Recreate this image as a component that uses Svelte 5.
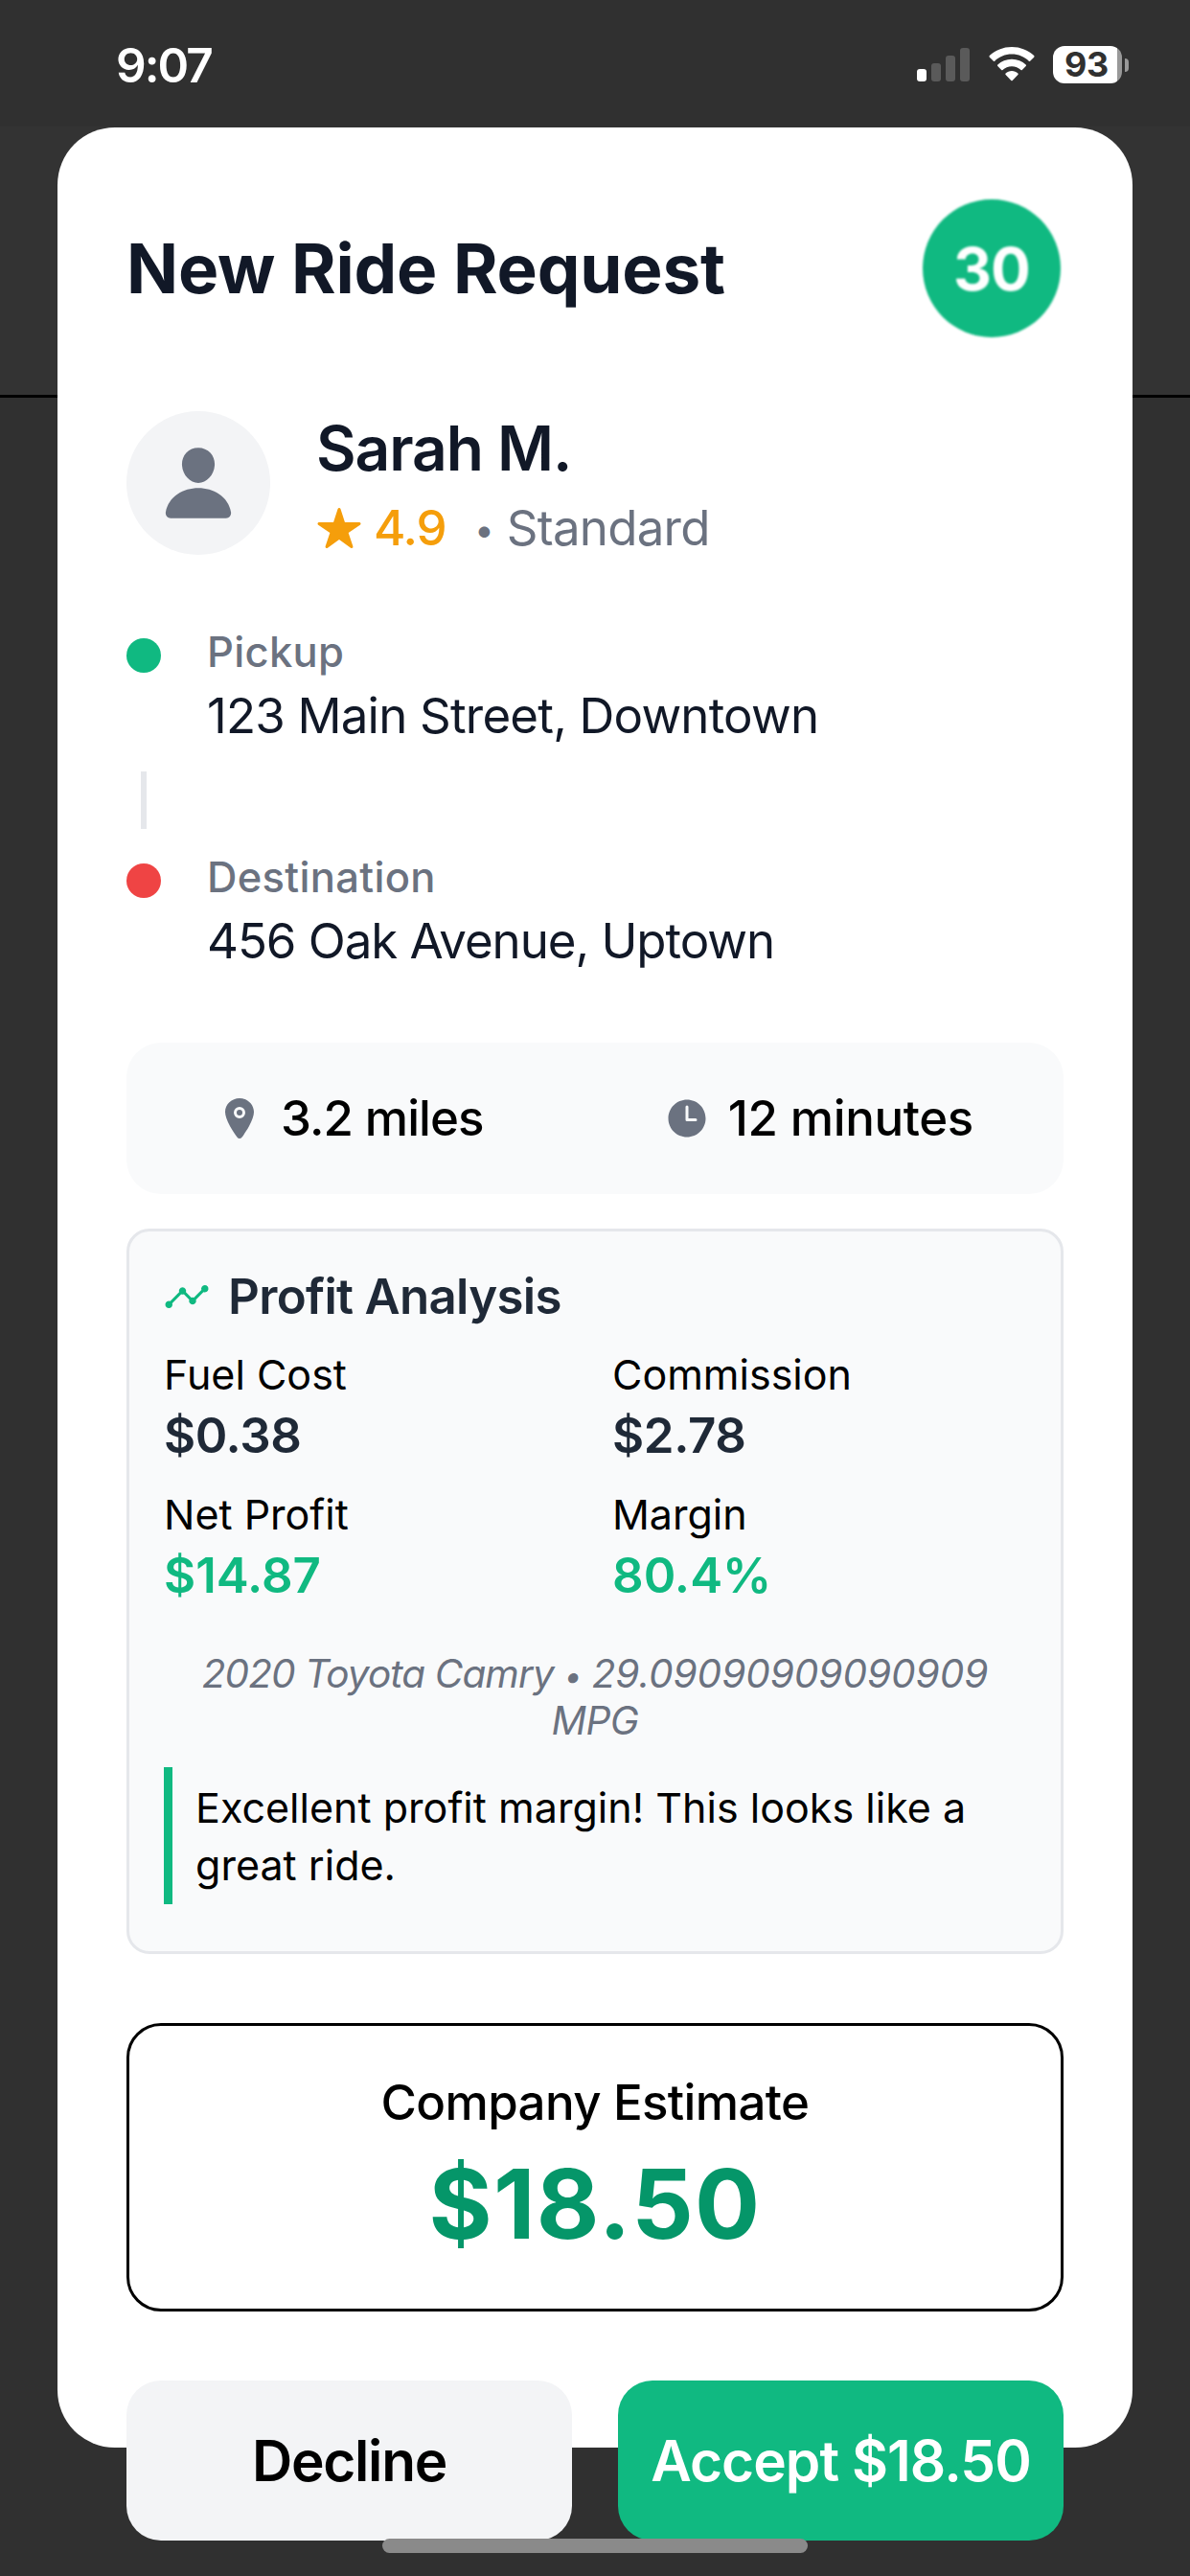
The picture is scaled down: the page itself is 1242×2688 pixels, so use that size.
<script>
  const trip = {
    rider: 'Sarah M.',
    rating: '4.9',
    type: 'Standard',
    pickup: '123 Main Street, Downtown',
    destination: '456 Oak Avenue, Uptown',
    distance: '3.2 miles',
    duration: '12 minutes',
    fare: '$18.50'
  };
  const metrics = [
    { label: 'Fuel Cost', value: '$0.38', tone: 'neutral' },
    { label: 'Commission', value: '$2.78', tone: 'neutral' },
    { label: 'Net Profit', value: '$14.87', tone: 'good' },
    { label: 'Margin', value: '80.4%', tone: 'good' }
  ];
  const vehicle = { name: '2020 Toyota Camry', mpg: '29.09090909090909' };
  const advice = 'Excellent profit margin! This looks like a great ride.';
  const bars = [13, 19, 27, 35];
</script>

<div class="screen">
  <header class="status">
    <span class="clock">9:07</span>
    <div class="indicators">
      <svg class="signal" viewBox="0 0 55 35" aria-hidden="true">
        {#each bars as h, i}
          <rect x={i * 15} y={35 - h} width="10" height={h} rx="3" fill={i === 0 ? '#fff' : '#5a5a5a'} />
        {/each}
      </svg>
      <svg class="wifi" viewBox="0 0 48 36" aria-hidden="true">
        <path fill="#fff" d="M24 7.600C31 7.600 37.200 10.300 41.800 14.700C42.200 15.100 42.700 15.100 43.100 14.700L47.200 10.700C47.700 10.200 47.700 9.600 47.200 9.100C41.200 3.400 33 0 24 0S6.800 3.400 0.800 9.100C0.300 9.600 0.300 10.200 0.800 10.700L4.900 14.700C5.300 15.100 5.800 15.100 6.200 14.700C10.800 10.300 17 7.600 24 7.600Z" />
        <path fill="#fff" d="M24 20.200C27.700 20.200 31 21.600 33.500 23.900C33.900 24.300 34.400 24.300 34.800 23.900L38.700 20C39.200 19.500 39.200 18.900 38.700 18.400C34.800 14.900 29.700 12.700 24 12.700S13.200 14.900 9.300 18.400C8.800 18.900 8.800 19.500 9.300 20L13.200 23.900C13.600 24.300 14.100 24.300 14.500 23.900C17 21.600 20.300 20.200 24 20.200Z" />
        <path fill="#fff" d="M30.400 27.500C30.900 28 30.900 28.600 30.400 29.100L24.700 34.900C24.300 35.300 23.700 35.300 23.300 34.900L17.600 29.100C17.100 28.600 17.100 28 17.600 27.500C19.300 26 21.500 25 24 25S28.700 26 30.400 27.500Z" />
      </svg>
      <div class="battery">
        <span class="cell">93</span>
        <span class="nub"></span>
      </div>
    </div>
  </header>

  <main class="card">
    <div class="heading">
      <h1>New Ride Request</h1>
      <div class="timer">30</div>
    </div>

    <section class="rider">
      <div class="avatar">
        <svg viewBox="0 0 512 512" aria-hidden="true"><path d="M332.640 64.580C313.180 43.570 286 32 256 32c-30.160 0-57.430 11.500-76.800 32.380-19.580 21.110-29.120 49.800-26.880 80.780C156.760 206.280 203.270 256 256 256s99.160-49.710 103.670-110.820c2.270-30.700-7.330-59.330-27.030-80.600zM432 480H80a31 31 0 0 1-24.200-11.130c-6.500-7.770-9.120-18.380-7.180-29.110C57.060 392.940 83.400 353.610 124.800 326c36.780-24.510 83.370-38 131.200-38s94.420 13.500 131.200 38c41.400 27.600 67.740 66.930 76.180 113.750 1.940 10.730-.68 21.340-7.180 29.110A31 31 0 0 1 432 480z" /></svg>
      </div>
      <div class="who">
        <div class="name">{trip.rider}</div>
        <div class="meta">
          <svg class="star" viewBox="0 0 512 512" aria-hidden="true"><path d="M394 480a16 16 0 0 1-9.390-3L256 383.760 127.390 477a16 16 0 0 1-24.550-18.080L153 310.350 23 221.200a16 16 0 0 1 9-29.200h160.380l48.400-148.950a16 16 0 0 1 30.440 0l48.400 149H480a16 16 0 0 1 9.050 29.200L359 310.350l50.130 148.530A16 16 0 0 1 394 480z" /></svg>
          <span class="score">{trip.rating}</span>
          <span class="type"><span class="bullet">•</span> {trip.type}</span>
        </div>
      </div>
    </section>

    <section class="route">
      <div class="stop">
        <span class="dot pickup"></span>
        <div>
          <div class="stop-label">Pickup</div>
          <div class="address">{trip.pickup}</div>
        </div>
      </div>
      <div class="connector"></div>
      <div class="stop">
        <span class="dot destination"></span>
        <div>
          <div class="stop-label">Destination</div>
          <div class="address second">{trip.destination}</div>
        </div>
      </div>
    </section>

    <section class="stats">
      <div class="stat">
        <svg viewBox="0 0 512 512" aria-hidden="true"><circle cx="256" cy="192" r="32" /><path d="M256 32c-88.220 0-160 68.650-160 153 0 40.170 18.310 93.590 54.420 158.780 29 52.340 62.550 99.670 80 123.220a31.750 31.750 0 0 0 51.220 0c17.420-23.550 51-70.880 80-123.220C397.690 278.610 416 225.190 416 185c0-84.350-71.780-153-160-153zm0 224a64 64 0 1 1 64-64 64.070 64.070 0 0 1-64 64z" /></svg>
        <span class="miles">{trip.distance}</span>
      </div>
      <div class="stat">
        <svg viewBox="0 0 512 512" aria-hidden="true"><path d="M256 48C141.130 48 48 141.130 48 256s93.130 208 208 208 208-93.130 208-208S370.870 48 256 48zm96 240h-96a16 16 0 0 1-16-16V128a16 16 0 0 1 32 0v128h80a16 16 0 0 1 0 32z" /></svg>
        <span class="minutes">{trip.duration}</span>
      </div>
    </section>

    <section class="profit">
      <div class="profit-head">
        <svg viewBox="0 0 512 512" aria-hidden="true"><path d="M456 128a40 40 0 0 0-37.230 54.600l-84.170 84.170a39.860 39.860 0 0 0-29.200 0l-60.170-60.170a40 40 0 1 0-74.460 0L70.600 306.770a40 40 0 1 0 22.630 22.630L193.400 229.230a39.860 39.860 0 0 0 29.200 0l60.170 60.170a40 40 0 1 0 74.460 0l84.170-84.170A40 40 0 1 0 456 128z" /></svg>
        <h2>Profit Analysis</h2>
      </div>
      <div class="metrics">
        {#each metrics as m}
          <div class="metric">
            <div class="metric-label">{m.label}</div>
            <div class="metric-value {m.tone}">{m.value}</div>
          </div>
        {/each}
      </div>
      <p class="vehicle"><span class="model">{vehicle.name}</span> <span class="bullet">•</span> <span class="mpg">{vehicle.mpg}</span> MPG</p>
      <p class="advice">{advice}</p>
    </section>

    <section class="estimate">
      <div class="estimate-label">Company Estimate</div>
      <div class="estimate-value">{trip.fare}</div>
    </section>

    <div class="actions">
      <button class="decline">Decline</button>
      <button class="accept">Accept {trip.fare}</button>
    </div>
  </main>

  <div class="home"></div>
</div>

<style>
  :global(body) {
    margin: 0;
    background: #303030;
  }
  .screen {
    position: relative;
    box-sizing: border-box;
    width: 1242px;
    height: 2688px;
    overflow: hidden;
    font-family: Inter, 'Liberation Sans', sans-serif;
    color: #000;
    background: linear-gradient(#303030 132px, #333 132px, #333 412px, #000 412px, #000 415px, #303030 415px);
  }
  h1, h2, p {
    margin: 0;
  }

  .status {
    box-sizing: border-box;
    height: 133px;
    padding: 48px 64px 0 121px;
    display: flex;
    justify-content: space-between;
    align-items: flex-start;
  }
  .clock {
    color: #fff;
    font-size: 49.5px;
    font-weight: 600;
    line-height: 40px;
    letter-spacing: -1.98px;
  }
  .indicators {
    display: flex;
    height: 39px;
  }
  .signal {
    width: 55px;
    height: 35px;
    margin: 2px 20px 0 0;
  }
  .wifi {
    width: 48px;
    height: 36px;
    margin: 1px 19px 0 0;
  }
  .battery {
    display: flex;
    align-items: center;
    gap: 3px;
  }
  .cell {
    width: 72px;
    height: 39px;
    border-radius: 12px;
    background: linear-gradient(90deg, #fff 67px, #999 67px);
    color: #303030;
    font-size: 36px;
    font-weight: 700;
    line-height: 39px;
    letter-spacing: -0.4px;
    text-indent: 12px;
  }
  .nub {
    width: 4px;
    height: 14px;
    border-radius: 0 4px 4px 0;
    background: #999;
  }

  .card {
    box-sizing: border-box;
    width: 1122px;
    height: 2421px;
    margin: 0 auto;
    padding: 72px;
    border-radius: 60px;
    background: #fff;
  }
  .heading {
    display: flex;
    justify-content: space-between;
    align-items: center;
    height: 150px;
    padding-right: 3px;
  }
  h1 {
    font-size: 71px;
    font-weight: 700;
    line-height: 86px;
    letter-spacing: -0.16px;
    color: #111827;
  }
  .timer {
    width: 144px;
    height: 144px;
    border-radius: 50%;
    background: #10b981;
    color: #fff;
    font-size: 62px;
    font-weight: 700;
    line-height: 146px;
    letter-spacing: -1px;
    text-align: center;
    filter: blur(0.8px);
  }

  .rider {
    display: flex;
    gap: 48px;
    margin-top: 74px;
  }
  .avatar {
    display: grid;
    place-items: center;
    width: 150px;
    height: 150px;
    border-radius: 50%;
    background: #f3f4f6;
  }
  .avatar svg {
    width: 84px;
    height: 84px;
    fill: #6b7280;
  }
  .name {
    height: 78px;
    font-size: 64px;
    font-weight: 600;
    line-height: 78px;
    letter-spacing: -1.04px;
    color: #111827;
  }
  .meta {
    display: flex;
    align-items: center;
    height: 64px;
    margin-top: 12px;
    font-size: 51px;
    line-height: 64px;
  }
  .star {
    width: 48px;
    height: 48px;
    margin-right: 12px;
    fill: #f59e0b;
  }
  .score {
    width: 105px;
    font-weight: 500;
    letter-spacing: -1.13px;
    color: #f59e0b;
  }
  .type {
    letter-spacing: -0.73px;
    color: #6b7280;
  }
  .type .bullet {
    font-size: 37px;
    line-height: 1;
    vertical-align: 3px;
  }

  .route {
    margin-top: 69px;
  }
  .stop {
    display: flex;
    gap: 48px;
    height: 129px;
  }
  .dot {
    width: 36px;
    height: 36px;
    margin-top: 14px;
    border-radius: 50%;
  }
  .pickup {
    background: #10b981;
  }
  .destination {
    background: #ef4444;
  }
  .stop-label {
    font-size: 43.5px;
    font-weight: 500;
    line-height: 57px;
    letter-spacing: 0.33px;
    color: #6b7280;
  }
  .address {
    margin-top: 6px;
    font-size: 51px;
    line-height: 64px;
    letter-spacing: -0.8px;
    color: #111827;
  }
  .second {
    letter-spacing: -1.04px;
  }
  .connector {
    width: 6px;
    height: 60px;
    margin: 24px 0 22px 15px;
    background: #e5e7eb;
  }

  .stats {
    display: flex;
    justify-content: space-around;
    align-items: center;
    height: 158px;
    margin-top: 72px;
    border-radius: 36px;
    background: #f9fafb;
  }
  .stat {
    display: flex;
    align-items: center;
    gap: 19px;
    font-size: 51px;
    font-weight: 500;
    line-height: 64px;
  }
  .stat svg {
    width: 48px;
    height: 48px;
    fill: #6b7280;
  }
  .miles {
    letter-spacing: -0.91px;
  }
  .minutes {
    letter-spacing: -0.39px;
  }

  .profit {
    box-sizing: border-box;
    height: 757px;
    margin-top: 36px;
    padding: 36px;
    border: 3px solid #e5e7eb;
    border-radius: 24px;
    background: #f9fafb;
  }
  .profit-head {
    display: flex;
    align-items: center;
    gap: 19px;
    height: 64px;
  }
  .profit-head svg {
    width: 48px;
    height: 48px;
    fill: #10b981;
  }
  h2 {
    font-size: 51px;
    font-weight: 600;
    line-height: 64px;
    letter-spacing: -0.69px;
    color: #1f2937;
  }
  .metrics {
    display: grid;
    grid-template-columns: 1fr 1fr;
    column-gap: 36px;
    margin-top: 22px;
  }
  .metric {
    height: 146px;
  }
  .metric-label {
    font-size: 43px;
    line-height: 54px;
  }
  .metric-value {
    margin-top: 5px;
    font-size: 51px;
    font-weight: 600;
    line-height: 64px;
    letter-spacing: -0.4px;
  }
  .neutral {
    color: #1f2937;
  }
  .good {
    color: #10b981;
    letter-spacing: 0;
  }
  .vehicle {
    margin-top: 23px;
    font-size: 40.5px;
    font-style: italic;
    line-height: 49px;
    letter-spacing: -0.5px;
    text-align: center;
    color: #6b7280;
  }
  .vehicle .bullet {
    font-size: 33px;
    line-height: 1;
  }
  .model {
    letter-spacing: -0.9px;
  }
  .mpg {
    letter-spacing: 0;
  }
  .advice {
    margin-top: 24px;
    padding: 12px 0 11px 24px;
    border-left: 9px solid #10b981;
    font-size: 43px;
    line-height: 60px;
    letter-spacing: 0.03px;
  }

  .estimate {
    box-sizing: border-box;
    height: 301px;
    margin-top: 72px;
    padding-top: 48px;
    border: 3px solid #000;
    border-radius: 36px;
    text-align: center;
  }
  .estimate-label {
    font-size: 51px;
    font-weight: 500;
    line-height: 64px;
    letter-spacing: -0.62px;
  }
  .estimate-value {
    margin-top: 12px;
    font-size: 101px;
    font-weight: 700;
    line-height: 122px;
    letter-spacing: 1.33px;
    color: #059669;
  }

  .actions {
    display: grid;
    grid-template-columns: 1fr 1fr;
    gap: 48px;
    margin-top: 72px;
  }
  button {
    height: 167px;
    padding: 0;
    border: 0;
    border-radius: 36px;
    font: 600 58.5px/72px Inter, 'Liberation Sans', sans-serif;
  }
  .decline {
    background: #f3f4f6;
    color: #000;
    letter-spacing: -1.29px;
  }
  .accept {
    background: #10b981;
    color: #fff;
    letter-spacing: -0.93px;
    white-space: nowrap;
  }

  .home {
    position: absolute;
    left: 399px;
    top: 2649px;
    width: 444px;
    height: 15px;
    border-radius: 8px;
    background: #8a8a8a;
  }
</style>
